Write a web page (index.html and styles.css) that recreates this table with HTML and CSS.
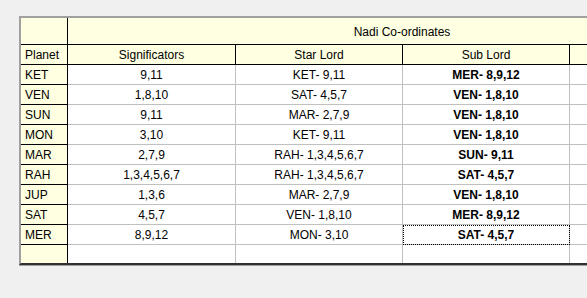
FILE: index.html
```html
<!DOCTYPE html>
<html>
<head>
<meta charset="utf-8">
<link rel="stylesheet" href="styles.css">
</head>
<body>
<div class="viewport">
<div class="grid">
  <div class="c fix hd1"></div>
  <div class="c hd hd1 span">Nadi Co-ordinates</div>

  <div class="c fix hd2 left">Planet</div>
  <div class="c hd hd2">Significators</div>
  <div class="c hd hd2">Star Lord</div>
  <div class="c hd hd2">Sub Lord</div>
  <div class="c hd hd2"></div>

  <div class="c fix left">KET</div><div class="c">9,11</div><div class="c">KET- 9,11</div><div class="c b">MER- 8,9,12</div><div class="c"></div>
  <div class="c fix left">VEN</div><div class="c">1,8,10</div><div class="c">SAT- 4,5,7</div><div class="c b">VEN- 1,8,10</div><div class="c"></div>
  <div class="c fix left">SUN</div><div class="c">9,11</div><div class="c">MAR- 2,7,9</div><div class="c b">VEN- 1,8,10</div><div class="c"></div>
  <div class="c fix left">MON</div><div class="c">3,10</div><div class="c">KET- 9,11</div><div class="c b">VEN- 1,8,10</div><div class="c"></div>
  <div class="c fix left">MAR</div><div class="c">2,7,9</div><div class="c">RAH- 1,3,4,5,6,7</div><div class="c b">SUN- 9,11</div><div class="c"></div>
  <div class="c fix left">RAH</div><div class="c">1,3,4,5,6,7</div><div class="c">RAH- 1,3,4,5,6,7</div><div class="c b">SAT- 4,5,7</div><div class="c"></div>
  <div class="c fix left">JUP</div><div class="c">1,3,6</div><div class="c">MAR- 2,7,9</div><div class="c b">VEN- 1,8,10</div><div class="c"></div>
  <div class="c fix left">SAT</div><div class="c">4,5,7</div><div class="c">VEN- 1,8,10</div><div class="c b">MER- 8,9,12</div><div class="c"></div>
  <div class="c fix left">MER</div><div class="c">8,9,12</div><div class="c">MON- 3,10</div><div class="c b focus">SAT- 4,5,7</div><div class="c"></div>
  <div class="c fix last"></div><div class="c last"></div><div class="c last"></div><div class="c last"></div><div class="c last"></div>
</div>
</div>
</body>
</html>
```

FILE: styles.css
```css
html, body {
  margin: 0;
  padding: 0;
  background: #f0f0f0;
  width: 587px;
  height: 298px;
  overflow: hidden;
}
body {
  padding: 16px 0 0 19px;
  box-sizing: border-box;
  font-family: "Liberation Sans", Arial, sans-serif;
  font-size: 12px;
  color: #000;
}
.viewport {
  width: 568px;
  height: 252px;
  overflow: hidden;
}
.grid {
  display: grid;
  grid-template-columns: 47px 168px 167px 167px 167px;
  grid-template-rows: 27px 20px repeat(9, 20px) 18px;
  width: 718px;
  border-top: 2px solid #a0a0a0;
  border-left: 2px solid #a0a0a0;
  border-bottom: 2px solid #303030;
  box-shadow: 0 1px 0 #a0a0a0;
  background: #fff;
}
.c {
  box-sizing: border-box;
  border-right: 1px solid #c0c0c0;
  border-bottom: 1px solid #c0c0c0;
  display: flex;
  align-items: center;
  justify-content: center;
  white-space: nowrap;
  overflow: hidden;
}
.fix {
  background: #ffffe1;
  border-right-color: #000;
  border-bottom-color: #000;
}
.left {
  justify-content: flex-start;
  padding-left: 4px;
}
.hd {
  background: #ffffe1;
  border-right-color: #000;
  border-bottom-color: #000;
}
.hd1 {
  padding-top: 1px;
}
.span {
  grid-column: 2 / -1;
}
.b {
  font-weight: bold;
}
.last {
  border-bottom: none;
}
.focus {
  outline: 1px dotted #000;
  outline-offset: -1px;
}
```
